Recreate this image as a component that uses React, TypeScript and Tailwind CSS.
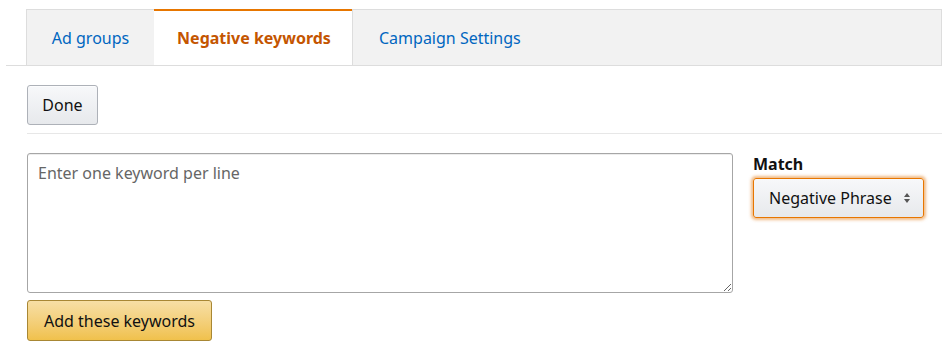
const App = () => {
  return (
    <div className="min-h-screen bg-white pt-[9px] pl-[6px] pr-[3px] font-['Noto_Sans','Liberation_Sans',sans-serif] text-[16px] text-[#111]">
      {/* tabs */}
      <div className="flex h-[57px] border-b border-[#dddddd]">
        <div className="w-[20px]" />
        <div className="flex w-[128px] items-center justify-center border-t border-l border-[#dddddd] bg-[#f2f2f2] pt-[1px] text-[#0066c0]">
          Ad groups
        </div>
        <div className="flex w-[198px] items-center justify-center border-t-2 border-[#e77600] bg-white pl-[2px] font-bold text-[#c45500]">
          Negative keywords
        </div>
        <div className="flex flex-1 items-center border-t border-l border-r border-[#dddddd] bg-[#f2f2f2] pt-[1px] pl-[26px] text-[#0066c0]">
          Campaign Settings
        </div>
      </div>

      <div className="pl-[21px]">
        <div className="border-b border-[#e7e7e7] pt-[19px] pb-[8px]">
          <button className="h-[40px] w-[71px] rounded-[3px] border border-[#adb1b8] bg-gradient-to-b from-[#f7f8fa] to-[#e7e9ec] text-[#111] shadow-[0_1px_0_rgba(255,255,255,0.6)_inset]">
            Done
          </button>
        </div>

        <div className="flex gap-[20px] pt-[19px]">
          <div className="flex flex-col gap-[7px]">
            <textarea
              placeholder="Enter one keyword per line"
              className="h-[140px] w-[706px] rounded-[3px] border border-[#a6a6a6] px-[10px] py-[8px] leading-[22px] text-[#111] shadow-[0_1px_0_rgba(0,0,0,0.07)_inset] placeholder:text-[#666] focus:outline-none"
            />
            <button className="h-[41px] w-[185px] rounded-[3px] border border-[#a88734] bg-gradient-to-b from-[#f7dfa5] to-[#f0c14b] text-[#111]">
              Add these keywords
            </button>
          </div>
          <div className="flex flex-col pt-[1px]">
            <div className="font-bold leading-[20px] text-[#111]">Match</div>
            <div className="mt-[4px] flex h-[40px] w-[171px] items-center justify-between rounded-[3px] border border-[#e77600] bg-gradient-to-b from-[#f7f8fa] to-[#e7e9ec] pl-[15px] pr-[12px] shadow-[0_0_3px_2px_rgba(228,121,17,0.5)]">
              <span>Negative Phrase</span>
              <svg width="8" height="12" viewBox="0 0 8 12" className="text-[#555]">
                <path d="M4 1 L7 5 H1 Z" fill="currentColor" />
                <path d="M4 11 L7 7 H1 Z" fill="currentColor" />
              </svg>
            </div>
          </div>
        </div>
      </div>
    </div>
  );
};

export default App;
